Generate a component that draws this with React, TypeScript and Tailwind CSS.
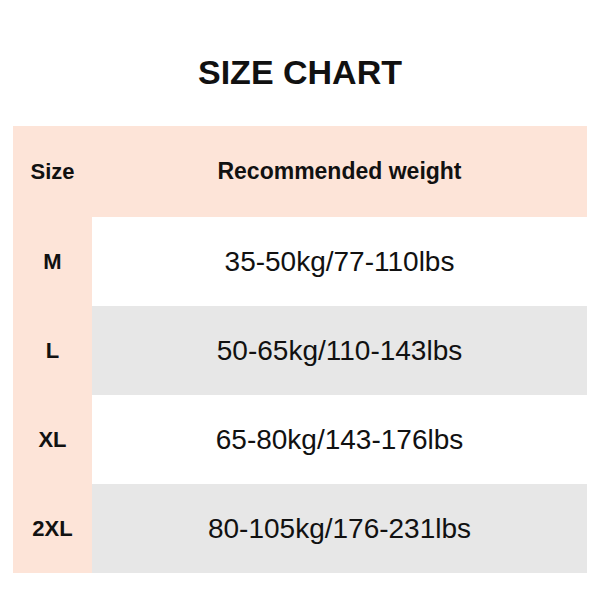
import React from 'react';

const ROWS = [
  { size: 'M', weight: '35-50kg/77-110lbs', shade: false },
  { size: 'L', weight: '50-65kg/110-143lbs', shade: true },
  { size: 'XL', weight: '65-80kg/143-176lbs', shade: false },
  { size: '2XL', weight: '80-105kg/176-231lbs', shade: true },
];

const App: React.FC = () => {
  return (
    <div className="w-[600px] h-[600px] bg-white font-['Liberation_Sans',Arial,sans-serif] text-[#111]">
      <div className="pt-[50px] h-[126px]">
        <h1 className="text-center text-[34px] font-bold leading-[44px]">SIZE CHART</h1>
      </div>
      <div className="mx-[13px] bg-[#fde4d8]">
        <div className="flex h-[91px] items-center">
          <div className="w-[79px] text-center text-[22px] font-bold">Size</div>
          <div className="flex-1 text-center text-[23px] font-bold">Recommended weight</div>
        </div>
        {ROWS.map((row) => (
          <div key={row.size} className="flex h-[89px]">
            <div className="w-[79px] flex items-center justify-center text-[22px] font-bold">{row.size}</div>
            <div
              className={`flex-1 flex items-center justify-center text-[28px] ${row.shade ? 'bg-[#e7e7e7]' : 'bg-white'}`}
            >
              {row.weight}
            </div>
          </div>
        ))}
      </div>
    </div>
  );
};

export default App;
